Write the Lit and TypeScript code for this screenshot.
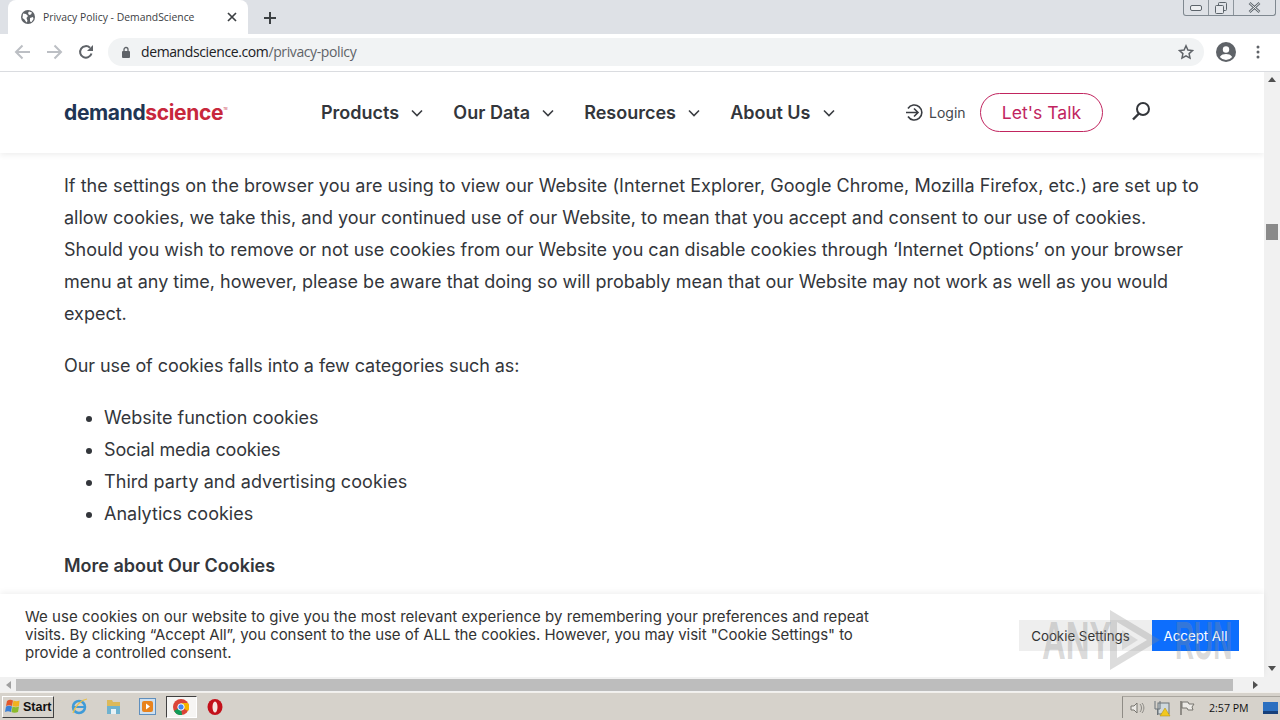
import { LitElement, html, css, svg } from 'lit';
import { customElement } from 'lit/decorators.js';

const chevron = svg`<svg class="chev" width="12" height="8" viewBox="0 0 12 8"><path d="M1 1.5l5 5 5-5" fill="none" stroke="#3a3d42" stroke-width="1.6"/></svg>`;

@customElement('app-root')
export class AppRoot extends LitElement {
  static override styles = css`
    :host {
      display: flex;
      flex-direction: column;
      width: 1280px;
      height: 720px;
      overflow: hidden;
      position: relative;
      font-family: 'Inter', 'Liberation Sans', sans-serif;
      background: #fff;
    }

    /* browser chrome */
    .tabs {
      height: 34px;
      flex: none;
      background: #dee1e6;
      display: flex;
      align-items: flex-end;
      padding-left: 8px;
      position: relative;
    }
    .tab {
      width: 240px;
      height: 34px;
      background: #fff;
      border-radius: 8px 8px 0 0;
      display: flex;
      align-items: center;
      padding: 0 0 0 12px;
      box-sizing: border-box;
      font: 10.4px 'Open Sans', 'Liberation Sans', sans-serif;
      color: #3c4043;
    }
    .tab .title { margin-left: 7px; width: 184px; white-space: nowrap; }
    .newtab { margin: 0 0 9px 15px; display: block; }
    .winbtns {
      position: absolute;
      right: 4px;
      top: 0;
      width: 93px;
      height: 16px;
      border: 1px solid #7f8890;
      border-top: none;
      border-radius: 0 0 3px 3px;
      display: grid;
      grid-template-columns: 25px 25px 1fr;
      box-sizing: border-box;
    }
    .winbtns > div {
      display: flex;
      align-items: center;
      justify-content: center;
      border-right: 1px solid #8d959c;
    }
    .winbtns > div:last-child { border-right: none; }

    .toolbar {
      height: 38px;
      flex: none;
      box-sizing: border-box;
      background: #fff;
      border-bottom: 1px solid #dadce0;
      display: flex;
      align-items: center;
      padding: 0 0 1px 14px;
    }
    .navicon { display: block; margin-right: 15px; }
    .navicon.reload { margin-right: 14px; }
    .omni {
      width: 1096px;
      height: 28px;
      border-radius: 14px;
      background: #f1f3f4;
      display: flex;
      align-items: center;
      padding-left: 13px;
      box-sizing: border-box;
      font: 14px 'Open Sans', 'Liberation Sans', sans-serif;
      letter-spacing: -0.39px;
      color: #202124;
    }
    .omni .path { color: #5f6368; }
    .omni .url { margin: -1px 0 0 10px; flex: 1; }
    .omni svg.star { margin-right: 10px; }
    .account { margin-left: 12px; }
    .dots { margin-left: 20px; }

    /* page viewport */
    .viewport {
      flex: 1;
      display: flex;
      min-height: 0;
      position: relative;
    }
    .page { flex: 1; min-width: 0; overflow: hidden; }
    .vscroll {
      width: 16px;
      flex: none;
      background: #f1f1f1;
      position: relative;
    }
    .vscroll .thumb {
      position: absolute;
      left: 2px;
      top: 152px;
      width: 12px;
      height: 16px;
      background: #8a8a8a;
    }
    .vscroll .up, .vscroll .down { position: absolute; left: 4px; }
    .vscroll .up { top: 5px; }
    .vscroll .down { bottom: 6px; }

    .site-header {
      height: 81px;
      box-sizing: border-box;
      display: flex;
      align-items: center;
      background: #fff;
      box-shadow: 0 2px 6px rgba(0, 0, 0, 0.07);
      position: relative;
      padding-left: 64px;
    }
    .logo {
      width: 257px;
      font: 700 21px 'Inter', sans-serif;
      letter-spacing: -0.35px;
      color: #1f3554;
    }
    .logo span { color: #c8283c; }
    .logo sup { font-size: 3px; color: #c8283c; vertical-align: 10px; font-weight: 400; }
    .menu { display: flex; gap: 30.2px; width: 584px; }
    .menu a {
      display: flex;
      align-items: center;
      gap: 12px;
      font-weight: 600;
      font-size: 18px;
      color: #33363b;
    }
    .login {
      display: flex;
      align-items: center;
      gap: 5px;
      font-size: 14px;
      color: #44474c;
      width: 75px;
    }
    .talk {
      width: 123px;
      height: 39px;
      box-sizing: border-box;
      border: 1px solid #c1255f;
      border-radius: 20px;
      color: #c1255f;
      font-size: 17.6px;
      display: flex;
      align-items: center;
      justify-content: center;
    }
    .search { margin: -3px 0 0 28px; display: block; }

    .content {
      padding: 17px 0 0 64px;
      font-size: 18px;
      line-height: 32px;
      color: #33363b;
      width: 1140px;
    }
    .content p { margin: 0 0 20px; }
    .content ul { margin: 0 0 20px; padding-left: 40px; }
    .content b { font-weight: 600; }
    .wide { letter-spacing: 0.037px; }
    .tight { letter-spacing: -0.07px; }
    .tighter { letter-spacing: -0.15px; }
    .loose { letter-spacing: 0.06px; }

    .hscroll {
      height: 15px;
      flex: none;
      background: #f1f1f1;
      display: flex;
      align-items: center;
      position: relative;
    }
    .hscroll .track {
      margin-left: 16px;
      width: 1217px;
      height: 12px;
      background: #bdbdbd;
    }
    .hscroll .larr { position: absolute; left: 6px; }
    .hscroll .rarr { position: absolute; left: 1253px; }

    /* cookie banner, floats over the page */
    .cookie {
      position: absolute;
      left: 0;
      right: 16px;
      bottom: 0;
      height: 83px;
      background: #fff;
      box-shadow: 0 -2px 6px rgba(0, 0, 0, 0.06);
      display: flex;
      align-items: center;
      padding-left: 25px;
      box-sizing: border-box;
    }
    .cookie .msg {
      width: 860px;
      margin-top: -2px;
      font-size: 15px;
      line-height: 18px;
      color: #333;
    }
    .cookie .msg span { display: block; white-space: nowrap; }
    .cookie .msg .first { letter-spacing: 0.04px; }
    .cookie .msg .second { letter-spacing: -0.05px; }
    .cookie .actions { margin-left: 134px; display: flex; }
    .cookie button {
      height: 31px;
      border: none;
      font: 13.3px 'Inter', sans-serif;
      padding: 0;
    }
    .cookie .settings { width: 133px; padding-right: 10px; background: #eeeeee; color: #333; }
    .cookie .accept { width: 87px; background: #0d6efd; color: #fff; }

    /* taskbar */
    .taskbar {
      height: 28px;
      flex: none;
      background: #d6d2cb;
      border-top: 1px solid #f2f0ec;
      box-sizing: border-box;
      display: flex;
      align-items: center;
      padding-left: 2px;
      position: relative;
    }
    .start {
      width: 52px;
      height: 22px;
      box-sizing: border-box;
      display: flex;
      align-items: center;
      gap: 2px;
      padding-left: 2px;
      background: #d6d2cb;
      border: 1px solid;
      border-color: #fff #404040 #404040 #fff;
      font: 700 12.5px 'Liberation Sans', sans-serif;
      color: #111;
    }
    .quick { display: flex; align-items: center; margin-left: 8px; }
    .quick svg { display: block; }
    .slot {
      width: 34px;
      height: 22px;
      display: flex;
      align-items: center;
      justify-content: center;
      box-sizing: border-box;
    }
    .slot.active {
      width: 31px;
      margin: 0 1.500px;
      border: 1px solid;
      border-color: #404040 #fff #fff #404040;
      background: #f6f5f3;
    }
    .tray {
      position: absolute;
      right: 0;
      top: 3px;
      width: 158px;
      height: 22px;
      box-sizing: border-box;
      border-left: 1px solid #8f8c86;
      border-top: 1px solid #aaa69f;
      display: flex;
      align-items: center;
      padding-left: 6px;
      gap: 8px;
      font: 10.6px 'Open Sans', 'Liberation Sans', sans-serif;
      color: #111;
    }
    .tray .clock { margin-left: 6px; width: 46px; }

    /* sandbox watermark */
    .mark {
      position: absolute;
      left: 1042px;
      top: 608px;
      height: 64px;
      display: flex;
      align-items: center;
      font: 700 54px 'Liberation Sans', sans-serif;
      color: rgba(140, 140, 140, 0.32);
      pointer-events: none;
    }
    .mark span { display: block; transform-origin: left center; }
    .mark .any { width: 66px; transform: scaleX(0.61); }
    .mark .run { width: 58px; margin-left: 12px; transform: scaleX(0.49); }
  `;

  override render() {
    return html`
      <div class="tabs">
        <div class="tab">
          <svg width="16" height="16" viewBox="0 0 16 16">
            <circle cx="8" cy="8" r="7" fill="#5f6368"/>
            <path d="M3 4.5l3 .5 2 2-1.5 2 1 3-1 1.500-2-3-2-1.500zM9 2.500l3 1-1 2-2 .5-1-2zM10 9l3-1 .5 2-2 3-1.500-.5z" fill="#fff"/>
          </svg>
          <span class="title">Privacy Policy - DemandScience</span>
          <svg width="10" height="10" viewBox="0 0 10 10"><path d="M1 1l8 8M9 1l-8 8" stroke="#3c4043" stroke-width="1.700"/></svg>
        </div>
        <svg class="newtab" width="14" height="14" viewBox="0 0 14 14"><path d="M7 1v12M1 7h12" stroke="#3c4043" stroke-width="2"/></svg>
        <div class="winbtns">
          <div><svg width="12" height="6" viewBox="0 0 12 6"><rect x=".5" y=".5" width="11" height="5" rx="1.500" fill="#eef0f2" stroke="#5c646b"/></svg></div>
          <div><svg width="12" height="12" viewBox="0 0 12 12"><rect x="3.500" y=".5" width="8" height="8" rx="1" fill="none" stroke="#5c646b"/><rect x=".5" y="3.500" width="8" height="8" rx="1" fill="#e6e8ec" stroke="#5c646b"/></svg></div>
          <div><svg width="13" height="11" viewBox="0 0 13 11"><path d="M1.500 1l10 9M11.500 1l-10 9" stroke="#5c646b" stroke-width="2.600"/><path d="M1.500 1l10 9M11.500 1l-10 9" stroke="#eef0f2" stroke-width="1"/></svg></div>
        </div>
      </div>

      <div class="toolbar">
        <svg class="navicon" width="17" height="16" viewBox="0 0 17 16"><path d="M16 8H2M8.500 1.500L2 8l6.500 6.500" fill="none" stroke="#bcbfc4" stroke-width="2"/></svg>
        <svg class="navicon" width="17" height="16" viewBox="0 0 17 16"><path d="M1 8h14M8.500 1.500L15 8l-6.500 6.500" fill="none" stroke="#bcbfc4" stroke-width="2"/></svg>
        <svg class="navicon reload" width="16" height="16" viewBox="0 0 16 16"><path d="M13.500 9.500A5.800 5.800 0 1 1 12 3.800" fill="none" stroke="#5f6368" stroke-width="2"/><path d="M15 1v6H9z" fill="#5f6368"/></svg>
        <div class="omni">
          <svg width="10" height="12" viewBox="0 0 10 12"><rect x="1" y="5" width="8" height="7" rx="1" fill="#5f6368"/><path d="M3 5V3.500a2 2 0 0 1 4 0V5" fill="none" stroke="#5f6368" stroke-width="1.300"/></svg>
          <span class="url">demandscience.com<span class="path">/privacy-policy</span></span>
          <svg class="star" width="16" height="16" viewBox="0 0 16 16"><path d="M8 1.800l1.900 4.200 4.600.5-3.400 3.100.9 4.500L8 11.800 4 14.100l.9-4.500L1.500 6.500l4.600-.5z" fill="none" stroke="#5f6368" stroke-width="1.500"/></svg>
        </div>
        <svg class="account" width="20" height="20" viewBox="0 0 20 20"><circle cx="10" cy="10" r="10" fill="#5f6368"/><circle cx="10" cy="7.500" r="3.200" fill="#fff"/><path d="M3.800 15c1.500-2.400 3.800-3 6.200-3s4.700.6 6.200 3a8 8 0 0 1-12.400 0z" fill="#fff"/></svg>
        <svg class="dots" width="4" height="14" viewBox="0 0 4 14"><circle cx="2" cy="2" r="1.500" fill="#5f6368"/><circle cx="2" cy="7" r="1.500" fill="#5f6368"/><circle cx="2" cy="12" r="1.500" fill="#5f6368"/></svg>
      </div>

      <div class="viewport">
        <div class="page">
          <div class="site-header">
            <div class="logo">demand<span>science</span><sup>TM</sup></div>
            <nav class="menu">
              <a>Products ${chevron}</a>
              <a>Our Data ${chevron}</a>
              <a>Resources ${chevron}</a>
              <a>About Us ${chevron}</a>
            </nav>
            <div class="login">
              <svg width="19" height="19" viewBox="0 0 19 19"><path d="M3 5.500A7.500 7.500 0 1 1 3 13.500" fill="none" stroke="#3a3d42" stroke-width="1.600"/><path d="M1 9.500h12M9 5.500l4 4-4 4" fill="none" stroke="#3a3d42" stroke-width="1.600"/></svg>
              Login
            </div>
            <div class="talk">Let's Talk</div>
            <svg class="search" width="20" height="20" viewBox="0 0 20 20"><circle cx="12" cy="8" r="6" fill="none" stroke="#33363b" stroke-width="2"/><path d="M8 12.500L2 18.500" stroke="#33363b" stroke-width="2.400"/></svg>
          </div>
          <div class="content">
            <p><span class="wide">If the settings on the browser you are using to view our Website (Internet Explorer, Google Chrome, Mozilla Firefox, etc.) are set up to</span> allow cookies, we take this, and your continued use of our Website, to mean that you accept and consent to our use of cookies. Should you wish to remove or not use cookies from our Website you can disable cookies through ‘Internet Options’ on your browser menu at any time, however, please be aware that doing so will probably mean that our Website may not work as well as you would expect.</p>
            <p class="tight">Our use of cookies falls into a few categories such as:</p>
            <ul>
              <li>Website function cookies</li>
              <li class="tighter">Social media cookies</li>
              <li class="loose">Third party and advertising cookies</li>
              <li>Analytics cookies</li>
            </ul>
            <p><b>More about Our Cookies</b></p>
          </div>
        </div>
        <div class="vscroll">
          <svg class="up" width="8" height="5" viewBox="0 0 8 5"><path d="M4 0l4 5H0z" fill="#505050"/></svg>
          <div class="thumb"></div>
          <svg class="down" width="8" height="5" viewBox="0 0 8 5"><path d="M4 5L0 0h8z" fill="#505050"/></svg>
        </div>
        <div class="cookie">
          <div class="msg">
            <span class="first">We use cookies on our website to give you the most relevant experience by remembering your preferences and repeat</span>
            <span class="second">visits. By clicking “Accept All”, you consent to the use of ALL the cookies. However, you may visit "Cookie Settings" to</span>
            <span>provide a controlled consent.</span>
          </div>
          <div class="actions">
            <button class="settings">Cookie Settings</button>
            <button class="accept">Accept All</button>
          </div>
        </div>
      </div>

      <div class="hscroll">
        <svg class="larr" width="5" height="8" viewBox="0 0 5 8"><path d="M0 4l5-4v8z" fill="#a0a0a0"/></svg>
        <div class="track"></div>
        <svg class="rarr" width="5" height="8" viewBox="0 0 5 8"><path d="M5 4L0 0v8z" fill="#505050"/></svg>
      </div>

      <div class="taskbar">
        <div class="start">
          <svg width="16" height="15" viewBox="0 0 16 15">
            <path d="M2 2C4 .5 6 .5 8 1.500L7 7C5 6 3 6 1 7z" fill="#e2572a"/><path d="M8.500 1.500c2 1 4 1 6 0L14 7c-2 1-4 1-6.500 0z" fill="#f2b01e"/>
            <path d="M1 7.500c2-1 4-1 6 0L6 13c-2-1-4-1-6 0z" fill="#3a7fd5"/><path d="M7.500 7.500c2 1 4.500 1 6.500 0L13 13c-2 1-5 1-6.500 0z" fill="#8cbb2c"/>
          </svg>
          Start
        </div>
        <div class="quick">
          <div class="slot"><svg width="17" height="17" viewBox="0 0 17 17"><circle cx="8" cy="9" r="6" fill="none" stroke="#3f9bd8" stroke-width="2.500"/><path d="M3 9h10" stroke="#3f9bd8" stroke-width="2"/><path d="M2 15C4 8 10 2 16 1" fill="none" stroke="#e9c04a" stroke-width="1.200"/></svg></div>
          <div class="slot"><svg width="17" height="17" viewBox="0 0 17 17"><path d="M2 2h5l1 2h7v5H2z" fill="#dcb95a"/><rect x="2" y="8" width="13" height="8" fill="#6fb2cf"/><rect x="6" y="11" width="5" height="5" fill="#e8f2f6"/></svg></div>
          <div class="slot"><svg width="17" height="17" viewBox="0 0 17 17"><rect x=".5" y=".5" width="16" height="16" fill="#cfe0f0" stroke="#5f8fbd"/><rect x="3" y="3" width="11" height="11" rx="2" fill="#e8831e"/><path d="M7 5.500l4 3-4 3z" fill="#fff"/></svg></div>
          <div class="slot active">
            <svg width="16" height="16" viewBox="0 0 16 16"><circle cx="8" cy="8" r="8" fill="#db4437"/><path d="M8 8L1 12A8 8 0 0 0 9 16z" fill="#0f9d58"/><path d="M8 8l7 4A8 8 0 0 0 15 4H8z" fill="#f4b400"/><circle cx="8" cy="8" r="3.200" fill="#4285f4" stroke="#fff"/></svg>
          </div>
          <div class="slot"><svg width="16" height="16" viewBox="0 0 16 16"><ellipse cx="8" cy="8" rx="7.500" ry="8" fill="#c3101a"/><ellipse cx="8" cy="8" rx="2.500" ry="5.500" fill="#f6e4e0"/></svg></div>
        </div>
        <div class="tray">
          <svg width="16" height="16" viewBox="0 0 16 16"><path d="M2 6h3l3-3v10l-3-3H2z" fill="#eceae6" stroke="#77756f"/><path d="M11 4c2 2 2 6 0 8M13 3c2.500 3 2.500 7 0 10" fill="none" stroke="#8a8883"/></svg>
          <svg width="18" height="18" viewBox="0 0 18 18"><rect x="5" y="4" width="11" height="11" fill="#cfd8dc" stroke="#6b7378"/><path d="M2 2v8h5V2M4.500 10v6" fill="none" stroke="#6b7378"/><path d="M12 9l5 8H7z" fill="#f2c81e" stroke="#a88a12" stroke-width=".5"/></svg>
          <svg width="16" height="16" viewBox="0 0 16 16"><path d="M2 1v14" stroke="#77756f" stroke-width="1.500"/><path d="M3 2h6l1 2h5l-2 3 1 3H9L8 8H3z" fill="#eceae6" stroke="#77756f"/></svg>
          <span class="clock">2:57 PM</span>
          <svg width="15" height="12" viewBox="0 0 15 12"><rect width="15" height="12" fill="#2a6fc0"/><rect y="9" width="15" height="3" fill="#143f7a"/></svg>
        </div>
      </div>

      <div class="mark">
        <span class="any">ANY</span>
        <svg width="55" height="64" viewBox="0 0 55 64">
          <path d="M2 2l50 30L2 62zM9 14l30 18L9 50z" fill="rgba(140,140,140,.3)" fill-rule="evenodd"/>
          <path d="M14 22l16 10-16 10z" fill="rgba(140,140,140,.22)"/>
        </svg>
        <span class="run">RUN</span>
      </div>
    `;
  }
}
